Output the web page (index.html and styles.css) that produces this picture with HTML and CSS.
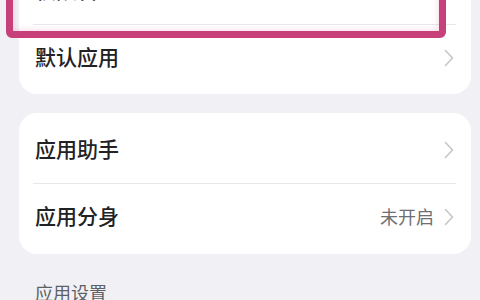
FILE: index.html
```html
<!DOCTYPE html>
<html lang="zh-CN">
<head>
<meta charset="UTF-8">
<title>应用管理</title>
<link rel="stylesheet" href="styles.css">
</head>
<body>

<div class="page">

    <!-- 第一组 -->
    <div class="card card-top">
        <div class="row">
            <span class="row-title">权限管理</span>
            <svg class="chevron" width="10" height="18" viewBox="0 0 10 18"><polyline points="1.5,1.5 8.5,9 1.5,16.5" fill="none" stroke="#c6c6c8" stroke-width="1.6" stroke-linecap="round" stroke-linejoin="round"/></svg>
        </div>
        <div class="divider"></div>
        <div class="row">
            <span class="row-title">默认应用</span>
            <svg class="chevron" width="10" height="18" viewBox="0 0 10 18"><polyline points="1.5,1.5 8.5,9 1.5,16.5" fill="none" stroke="#c6c6c8" stroke-width="1.6" stroke-linecap="round" stroke-linejoin="round"/></svg>
        </div>
        <!-- 标注框 -->
        <div class="highlight"></div>
    </div>

    <!-- 第二组 -->
    <div class="card">
        <div class="row">
            <span class="row-title">应用助手</span>
            <svg class="chevron" width="10" height="18" viewBox="0 0 10 18"><polyline points="1.5,1.5 8.5,9 1.5,16.5" fill="none" stroke="#c6c6c8" stroke-width="1.6" stroke-linecap="round" stroke-linejoin="round"/></svg>
        </div>
        <div class="divider"></div>
        <div class="row">
            <span class="row-title">应用分身</span>
            <span class="row-right">
                <span class="row-value">未开启</span>
                <svg class="chevron" width="10" height="18" viewBox="0 0 10 18"><polyline points="1.5,1.5 8.5,9 1.5,16.5" fill="none" stroke="#c6c6c8" stroke-width="1.6" stroke-linecap="round" stroke-linejoin="round"/></svg>
            </span>
        </div>
    </div>

    <div class="section-title">应用设置</div>

</div>

</body>
</html>
```

FILE: styles.css
```css
body {
    margin: 0;
    background-color: #f1f1f5;
    font-family: "Noto Sans CJK SC", "Noto Sans", sans-serif;
    color: #222224;
    overflow: hidden;
}
.page {
    margin-top: -46px;
    padding: 0 9px 0 19px;
}
.card {
    position: relative;
    background: #ffffff;
    border-radius: 18px;
    padding: 4px 0;
    margin-bottom: 19px;
}
.card-top {
    padding-bottom: 3px;
}
.row {
    display: flex;
    justify-content: space-between;
    align-items: center;
    height: 66px;
    padding: 0 17px 0 16px;
}
.row-title {
    font-size: 21px;
    font-weight: 500;
    line-height: 1;
    padding-bottom: 3px;
}
.row-right {
    display: flex;
    align-items: center;
    gap: 10px;
}
.row-value {
    font-size: 18px;
    color: #6f6f73;
    line-height: 1;
    padding-bottom: 2px;
}
.chevron {
    display: block;
}
.divider {
    height: 1px;
    background: #e8e8ec;
    margin: 0 15px 0 14px;
}
.highlight {
    position: absolute;
    left: -13px;
    top: -10px;
    width: 440px;
    height: 94px;
    box-sizing: border-box;
    border: 7px solid #c8407a;
    border-radius: 6px;
    box-shadow: inset 0 0 6px rgba(200, 64, 122, 0.25);
}
.section-title {
    font-size: 18px;
    color: #5f5f64;
    padding: 10px 0 0 16px;
    line-height: 1;
}
```
